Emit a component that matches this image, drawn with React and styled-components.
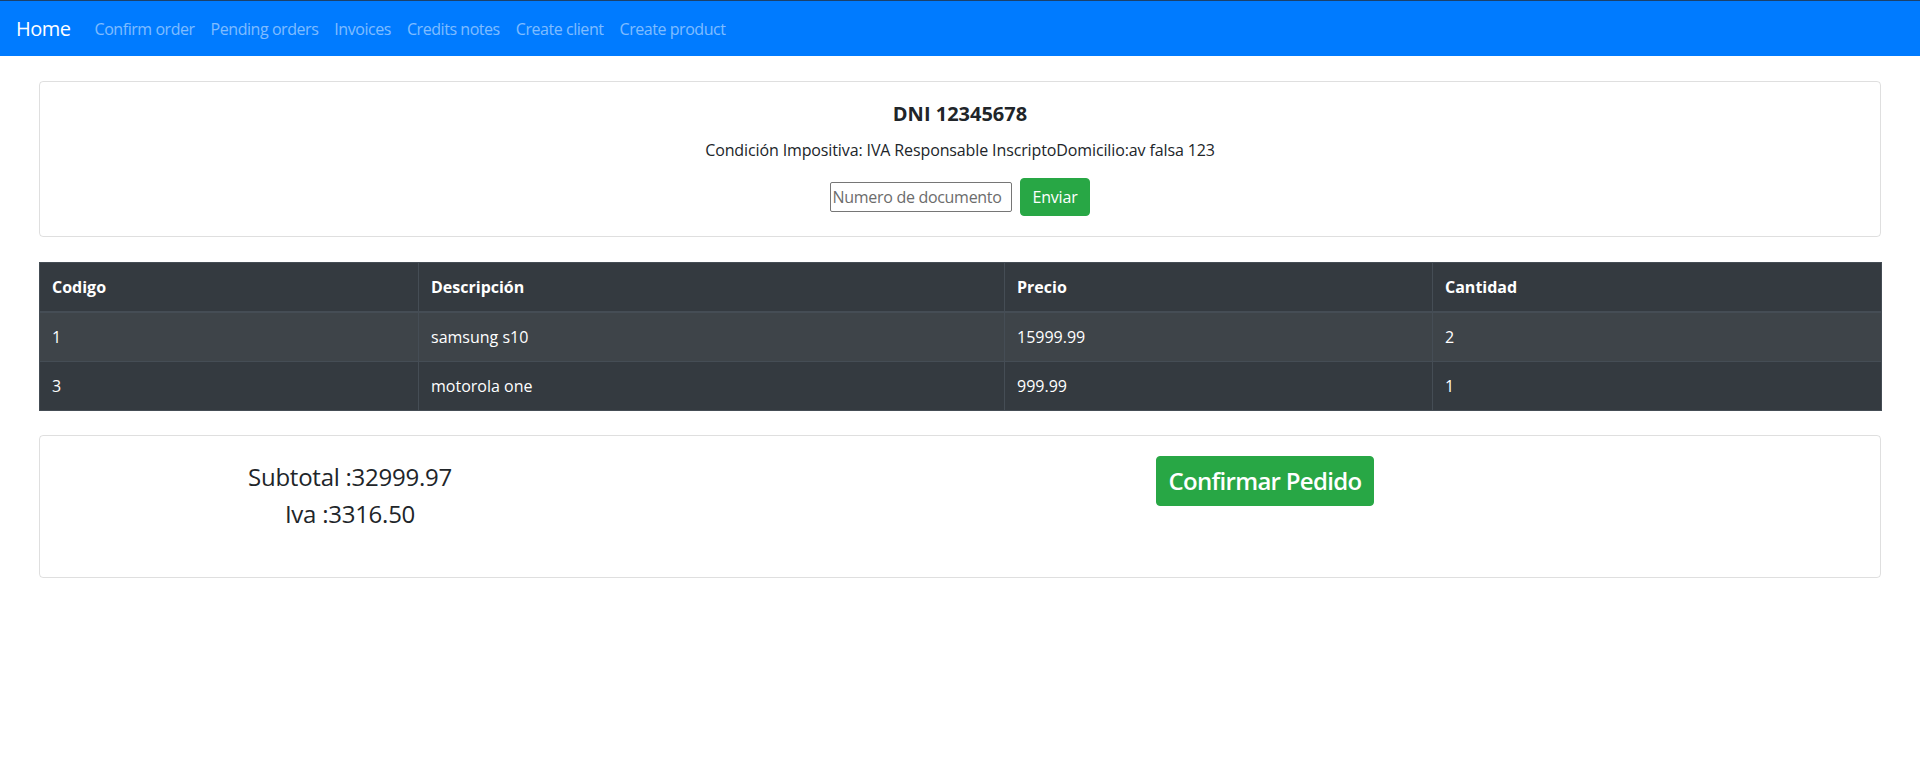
import React from 'react';
import styled, { createGlobalStyle } from 'styled-components';

const GlobalStyle = createGlobalStyle`
  * { box-sizing: border-box; }
  body {
    margin: 0;
    font-family: "Open Sans", "Noto Sans", sans-serif;
    font-size: 16px;
    line-height: 1.5;
    color: #212529;
    background: #fff;
  }
`;

const Navbar = styled.nav`
  display: flex;
  align-items: center;
  height: 56px;
  padding: 0 16px;
  background: #007bff;
  border-top: 1px solid #1b416b;
`;

const Brand = styled.a`
  font-size: 20px;
  line-height: 30px;
  letter-spacing: -0.5px;
  padding: 5px 0;
  margin-right: 16px;
  color: #fff;
  text-decoration: none;
`;

const NavLink = styled.a`
  padding: 8px;
  line-height: 24px;
  letter-spacing: -0.45px;
  color: rgba(255, 255, 255, 0.5);
  text-decoration: none;
`;

const Main = styled.main`
  display: flex;
  flex-direction: column;
  gap: 25px;
  padding: 25px 39px;
`;

const Card = styled.section`
  border: 1px solid rgba(0, 0, 0, 0.125);
  border-radius: 4px;
  padding: 20px;
  text-align: ${(p) => (p.$center ? 'center' : 'left')};
`;

const Title = styled.h5`
  margin: 0 0 12px;
  font-size: 20px;
  font-weight: 700;
  line-height: 24px;
`;

const Text = styled.p`
  margin: 0 0 16px;
  letter-spacing: -0.12px;
`;

const SearchForm = styled.form`
  display: flex;
  justify-content: center;
  align-items: center;
  gap: 8px;
`;

const Input = styled.input`
  width: 182px;
  height: 30px;
  padding: 1px 2px;
  border: 1px solid #767676;
  border-radius: 2px;
  font: inherit;
  letter-spacing: -0.3px;
  color: #212529;
  &::placeholder { color: #6c6c6c; }
`;

const Button = styled.button`
  border: 1px solid #28a745;
  border-radius: 4px;
  background: #28a745;
  color: #fff;
  font-family: inherit;
  font-size: ${(p) => (p.$large ? '24px' : '16px')};
  font-weight: ${(p) => (p.$large ? 600 : 400)};
  line-height: ${(p) => (p.$large ? '36px' : '24px')};
  letter-spacing: ${(p) => (p.$large ? '-0.7px' : '-0.2px')};
  padding: 6px 12px;
  cursor: pointer;
`;

const Table = styled.table`
  width: 100%;
  table-layout: fixed;
  border-collapse: collapse;
  background: #343a40;
  color: #fff;
  margin-bottom: -1px;
`;

const Th = styled.th`
  width: ${(p) => p.$w}px;
  padding: 12px;
  text-align: left;
  font-weight: 700;
  border: 1px solid #454d55;
  border-bottom-width: 2px;
`;

const Row = styled.tr`
  background: ${(p) => (p.$odd ? 'rgba(255,255,255,0.05)' : 'transparent')};
`;

const Td = styled.td`
  padding: 12px;
  border: 1px solid #454d55;
`;

const Grid = styled.div`
  display: flex;
  margin: 0 -15px;
  min-height: 101px;
`;

const Col = styled.div`
  flex: 0 0 ${(p) => (p.$span / 12) * 100}%;
  max-width: ${(p) => (p.$span / 12) * 100}%;
  padding: 0 15px;
  text-align: center;
`;

const Total = styled.h4`
  margin: 0 0 8px;
  font-size: 24px;
  font-weight: 500;
  line-height: 28.8px;
  letter-spacing: -0.25px;
  &:first-child { margin-top: 7px; }
`;

const columns = [
  { label: 'Codigo', w: 379 },
  { label: 'Descripción', w: 586 },
  { label: 'Precio', w: 428 },
  { label: 'Cantidad', w: 449 },
];

const products = [
  { code: 1, desc: 'samsung s10', price: '15999.99', qty: 2 },
  { code: 3, desc: 'motorola one', price: '999.99', qty: 1 },
];

const links = ['Confirm order', 'Pending orders', 'Invoices', 'Credits notes', 'Create client', 'Create product'];

export default function App() {
  return (
    <>
      <GlobalStyle />
      <Navbar>
        <Brand href="#">Home</Brand>
        {links.map((l) => (
          <NavLink key={l} href="#">{l}</NavLink>
        ))}
      </Navbar>
      <Main>
        <Card $center>
          <Title>DNI 12345678</Title>
          <Text>Condición Impositiva: IVA Responsable InscriptoDomicilio:av falsa 123</Text>
          <SearchForm onSubmit={(e) => e.preventDefault()}>
            <Input placeholder="Numero de documento" />
            <Button type="submit">Enviar</Button>
          </SearchForm>
        </Card>

        <Table>
          <thead>
            <tr>
              {columns.map((c) => (
                <Th key={c.label} $w={c.w}>{c.label}</Th>
              ))}
            </tr>
          </thead>
          <tbody>
            {products.map((p, i) => (
              <Row key={p.code} $odd={i % 2 === 0}>
                <Td>{p.code}</Td>
                <Td>{p.desc}</Td>
                <Td>{p.price}</Td>
                <Td>{p.qty}</Td>
              </Row>
            ))}
          </tbody>
        </Table>

        <Card>
          <Grid>
            <Col $span={4}>
              <Total>Subtotal :32999.97</Total>
              <Total>Iva :3316.50</Total>
            </Col>
            <Col $span={8}>
              <Button $large>Confirmar Pedido</Button>
            </Col>
          </Grid>
        </Card>
      </Main>
    </>
  );
}
